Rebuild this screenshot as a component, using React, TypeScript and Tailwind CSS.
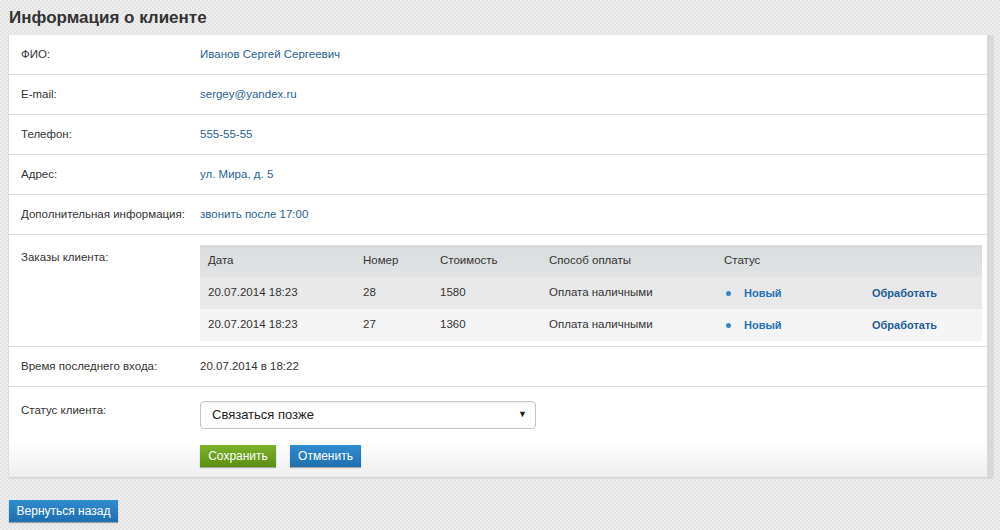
const orders = [
  { date: "20.07.2014 18:23", num: "28", sum: "1580", pay: "Оплата наличными", bg: "bg-[#e9e9e9]" },
  { date: "20.07.2014 18:23", num: "27", sum: "1360", pay: "Оплата наличными", bg: "bg-[#f5f5f5]" },
];

const info = [
  { label: "ФИО:", value: "Иванов Сергей Сергеевич" },
  { label: "E-mail:", value: "sergey@yandex.ru" },
  { label: "Телефон:", value: "555-55-55" },
  { label: "Адрес:", value: "ул. Мира, д. 5" },
  { label: "Дополнительная информация:", value: "звонить после 17:00" },
];

const Row = ({ label, children, className = "" }: { label: string; children: React.ReactNode; className?: string }) => (
  <div className={`flex border-b border-[#dcdcdc] ${className}`}>
    <div className="w-[191px] shrink-0 pl-3 text-[#333]">{label}</div>
    <div className="flex-1">{children}</div>
  </div>
);

export default function App() {
  return (
    <div
      className="min-h-[530px] w-[1000px] bg-[#ebebeb] bg-[repeating-conic-gradient(#e4e4e4_0_25%,#eeeeee_0_50%)] bg-[length:4px_4px] pt-[7px] text-[11.5px] text-[#333]"
      style={{ fontFamily: '"Liberation Sans", Arial, sans-serif' }}
    >
      <h1 className="pl-[9px] text-[17px] font-bold leading-[22px] text-[#333]">Информация о клиенте</h1>

      <div className="ml-[9px] mt-[6px] w-[984px] border-r-[6px] border-[#d8d8d8] bg-white shadow-[0_1px_2px_rgba(0,0,0,0.15)]">
        {info.map((r) => (
          <Row key={r.label} label={r.label} className="h-10 items-center">
            <span className="text-[#2a5f96]">{r.value}</span>
          </Row>
        ))}

        <Row label="Заказы клиента:" className="h-[112px] pt-[10px] [&>div:first-child]:pt-[4px]">
          <table className="w-[782px] border-collapse text-left">
            <thead>
              <tr className="h-8 bg-gradient-to-b from-[#d9dcdd] to-[#e1e3e4]">
                <th className="w-[163px] pl-2 font-normal">Дата</th>
                <th className="w-[77px] font-normal">Номер</th>
                <th className="w-[109px] font-normal">Стоимость</th>
                <th className="w-[175px] font-normal">Способ оплаты</th>
                <th className="w-[148px] font-normal">Статус</th>
                <th className="font-normal"></th>
              </tr>
            </thead>
            <tbody>
              {orders.map((o) => (
                <tr key={o.num} className={`h-8 ${o.bg}`}>
                  <td className="pl-2">{o.date}</td>
                  <td>{o.num}</td>
                  <td>{o.sum}</td>
                  <td>{o.pay}</td>
                  <td>
                    <span className="ml-[2px] inline-flex items-center gap-[13px] text-[11px] font-bold text-[#2273b8]">
                      <span className="inline-block h-[5px] w-[5px] rounded-full bg-[#3a86c4]" />
                      Новый
                    </span>
                  </td>
                  <td className="text-[11px] font-bold text-[#1f5c99]">Обработать</td>
                </tr>
              ))}
            </tbody>
          </table>
        </Row>

        <Row label="Время последнего входа:" className="h-10 items-center">
          <span>20.07.2014 в 18:22</span>
        </Row>

        <div className="flex bg-gradient-to-b from-white from-60% to-[#eeeeee] pb-[10px] pt-[14px]">
          <div className="w-[191px] shrink-0 pl-3 pt-[1px]">Статус клиента:</div>
          <div className="flex flex-col">
            <div className="flex h-7 w-[336px] items-center justify-between rounded-[4px] border border-[#c4c4c4] bg-white pl-[11px] pr-[8px] text-[13px] shadow-[inset_0_1px_2px_rgba(0,0,0,0.08)]">
              <span className="text-[#222]">Связаться позже</span>
              <span className="text-[9px] text-[#222]">▼</span>
            </div>
            <div className="mt-4 flex gap-[14px]">
              <button className="h-[22px] w-[76px] bg-gradient-to-b from-[#7fb22a] to-[#5a8f12] text-[12px] text-white shadow-[0_1px_1px_rgba(0,0,0,0.3)]">
                Сохранить
              </button>
              <button className="h-[22px] w-[71px] bg-gradient-to-b from-[#2f8ccf] to-[#1e6fb0] text-[12px] text-white shadow-[0_1px_1px_rgba(0,0,0,0.3)]">
                Отменить
              </button>
            </div>
          </div>
        </div>
      </div>

      <button className="ml-[9px] mt-[23px] h-[22px] w-[109px] bg-gradient-to-b from-[#2f8ccf] to-[#1e6fb0] text-[12px] text-white shadow-[0_1px_1px_rgba(0,0,0,0.3)]">
        Вернуться назад
      </button>
    </div>
  );
}
